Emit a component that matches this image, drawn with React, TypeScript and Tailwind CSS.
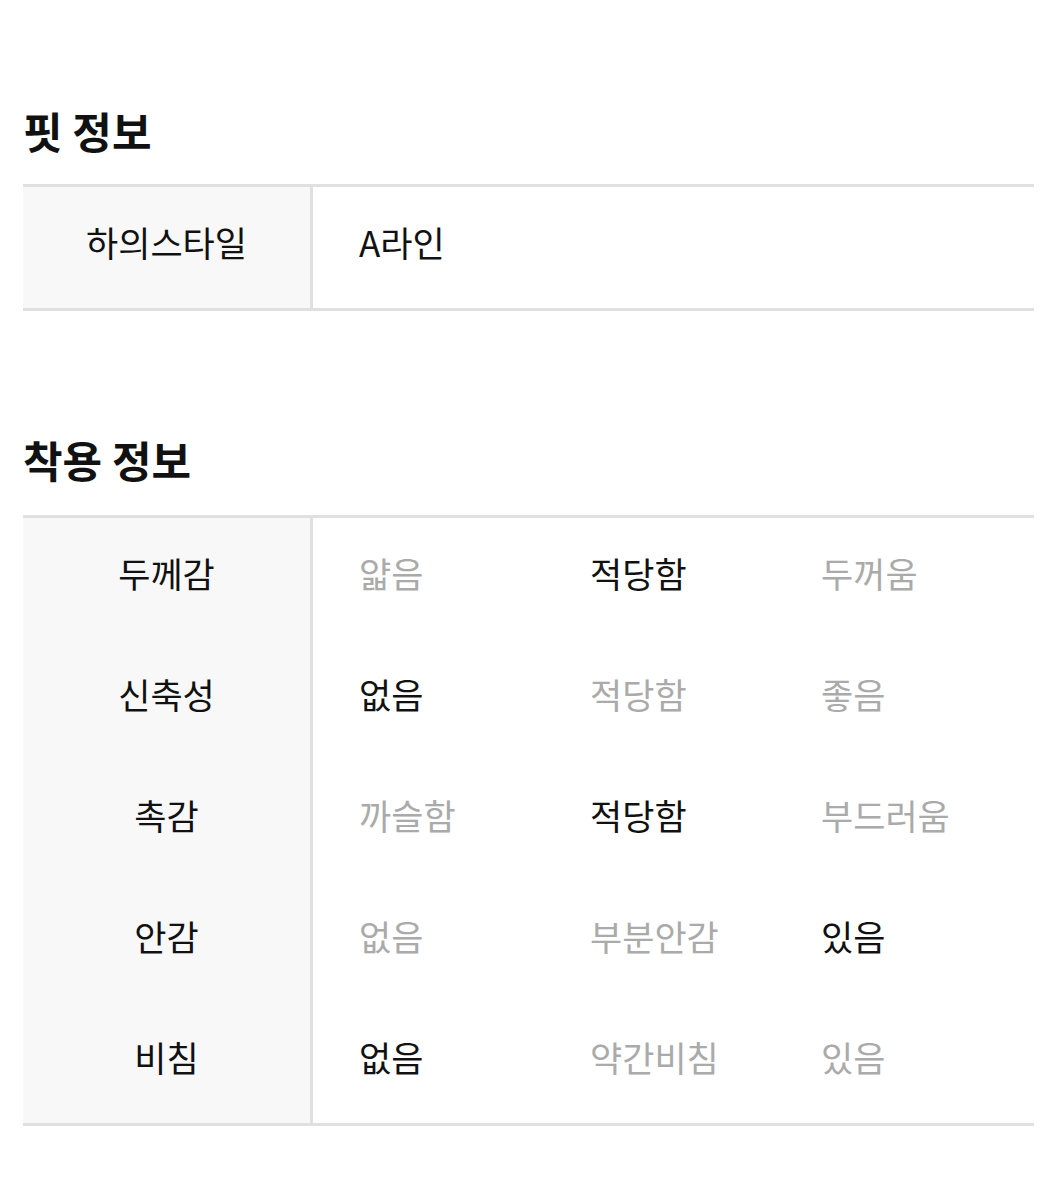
const FONT = { fontFamily: '"Noto Sans CJK KR", "Noto Sans", sans-serif' };

type Option = { label: string; on: boolean };
type FitRow = { name: string; options: Option[] };

const fitRows: FitRow[] = [
  {
    name: "두께감",
    options: [
      { label: "얇음", on: false },
      { label: "적당함", on: true },
      { label: "두꺼움", on: false },
    ],
  },
  {
    name: "신축성",
    options: [
      { label: "없음", on: true },
      { label: "적당함", on: false },
      { label: "좋음", on: false },
    ],
  },
  {
    name: "촉감",
    options: [
      { label: "까슬함", on: false },
      { label: "적당함", on: true },
      { label: "부드러움", on: false },
    ],
  },
  {
    name: "안감",
    options: [
      { label: "없음", on: false },
      { label: "부분안감", on: false },
      { label: "있음", on: true },
    ],
  },
  {
    name: "비침",
    options: [
      { label: "없음", on: true },
      { label: "약간비침", on: false },
      { label: "있음", on: false },
    ],
  },
];

function Label({ children }: { children: React.ReactNode }) {
  return (
    <div className="flex w-[290px] shrink-0 items-center justify-center border-r-[3px] border-[#e0e0e0] bg-[#f8f8f8] pb-[12px] text-[35px] leading-[48px] text-[#111]">
      {children}
    </div>
  );
}

export default function App() {
  return (
    <div className="min-h-[1200px] bg-white px-[23px] pt-[106px]" style={FONT}>
      <h2 className="text-[43px] font-bold leading-[48px] text-[#111]">핏 정보</h2>
      <div className="mt-[30px] w-[1011px] border-y-[3px] border-[#e0e0e0]">
        <div className="flex h-[121px]">
          <Label>하의스타일</Label>
          <div className="flex items-center pb-[12px] pl-[46px] text-[35px] leading-[48px] text-[#111]">
            A라인
          </div>
        </div>
      </div>

      <h2 className="mt-[124px] text-[43px] font-bold leading-[48px] text-[#111]">착용 정보</h2>
      <div className="mt-[32px] w-[1011px] border-y-[3px] border-[#e0e0e0]">
        {fitRows.map((row) => (
          <div key={row.name} className="flex h-[121px]">
            <Label>{row.name}</Label>
            <div className="flex items-center pb-[12px] pl-[46px]">
              {row.options.map((opt) => (
                <div
                  key={opt.label}
                  className={
                    "w-[231px] text-[35px] leading-[48px] " +
                    (opt.on ? "text-[#111]" : "text-[#aaaaaa]")
                  }
                >
                  {opt.label}
                </div>
              ))}
            </div>
          </div>
        ))}
      </div>
    </div>
  );
}
